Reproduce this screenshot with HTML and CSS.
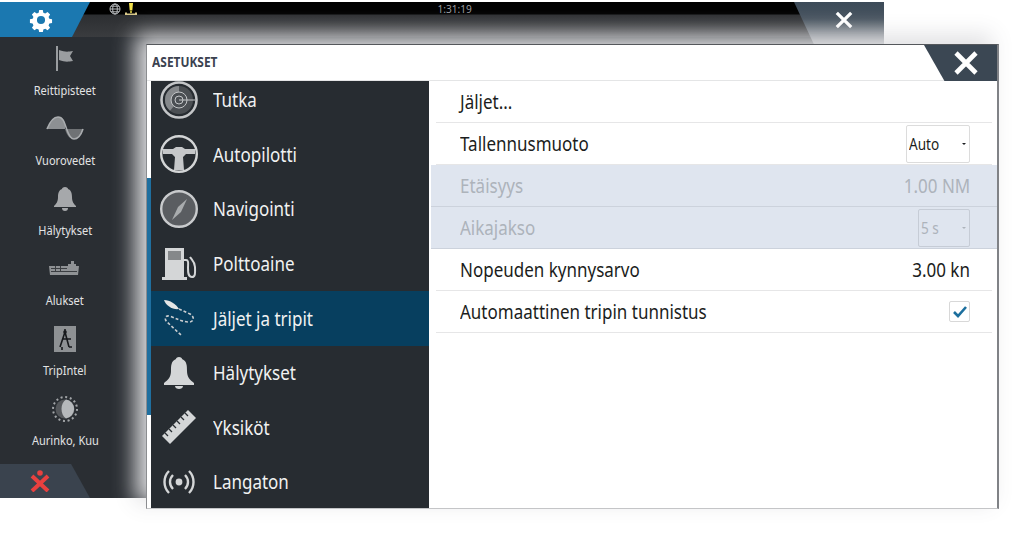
FILE: index.html
```html
<!DOCTYPE html>
<html lang="en">
<head>
    <meta charset="UTF-8">
    <title>Asetukset</title>
    <link rel="stylesheet" href="styles.css">
</head>
<body>
    <div class="back-window">
        <div class="top-bar">
            <div class="tab-gear">
                <svg viewBox="0 0 24 24" width="24" height="24"><path fill="#fff" fill-rule="evenodd" d="M10 1h4l.6 3 2.1.9 2.6-1.7 2.8 2.8-1.7 2.6.9 2.1 3 .6v4l-3 .6-.9 2.1 1.7 2.6-2.8 2.8-2.6-1.7-2.1.9-.6 3h-4l-.6-3-2.1-.9-2.6 1.7-2.8-2.8 1.7-2.6-.9-2.1-3-.6v-4l3-.6.9-2.1-1.7-2.6 2.8-2.8 2.6 1.7 2.1-.9zM12 7.500a4.500 4.500 0 1 0 0 9 4.500 4.500 0 0 0 0-9z" transform="translate(1.200 1.200) scale(.9)"/></svg>
            </div>
            <div class="status">
                <svg viewBox="0 0 12 12" width="12" height="12"><g fill="none" stroke="#b9bcbf"><circle cx="6" cy="6" r="5"/><ellipse cx="6" cy="6" rx="2.300" ry="5"/><path d="M1 6h10M2 3.200h8M2 8.800h8"/></g></svg>
                <svg viewBox="0 0 12 12" width="12" height="12"><path fill="#f2e14c" d="M4 0h4l-.7 7.500H4.700z"/><circle cx="6" cy="9" r="1" fill="#f2e14c"/><path fill="#d9c98a" d="M0 9.500h2v1h8v-1h2v2.500H0z"/></svg>
            </div>
            <div class="clock"><span>1:31:19</span></div>
            <div class="tab-close">
                <svg viewBox="0 0 20 20" width="18" height="18"><path stroke="#fff" stroke-width="3.600" d="M2 2l16 16M18 2L2 18"/></svg>
            </div>
        </div>
        <div class="side-nav">
            <div class="nav-item">
                <svg viewBox="0 0 24 26" width="24" height="26"><path fill="#9a9da0" d="M3 0h2v25H3z"/><path fill="#9a9da0" d="M6 4c6 2 8 2 14 1l-3 5 3 5c-6 1-8 1-14-1z"/></svg>
                <span>Reittipisteet</span>
            </div>
            <div class="nav-item">
                <svg viewBox="0 0 38 26" width="38" height="26"><path fill="#8d9093" d="M1 13C5 3 9 1 12 1c5 0 8 6 7 12z"/><path fill="#6f7275" d="M19 13c2 7 5 10 9 10 4 0 7-4 9-10z"/><path fill="none" stroke="#a9acaf" stroke-width="1.600" d="M1 13C5 3 9 1 12 1c6 0 7 8 9 13 2 6 4 9 7 9 4 0 7-4 9-10"/></svg>
                <span>Vuorovedet</span>
            </div>
            <div class="nav-item">
                <svg viewBox="0 0 24 26" width="24" height="26"><path fill="#a6a8ab" d="M12 1c2 0 3 1 3 2 3 1 4 4 4 8 0 5 2 7 4 9v1H1v-1c2-2 4-4 4-9 0-4 1-7 4-8 0-1 1-2 3-2z"/><path fill="#a6a8ab" d="M9 22h6c0 2-1 3-3 3s-3-1-3-3z"/></svg>
                <span>Hälytykset</span>
            </div>
            <div class="nav-item">
                <svg viewBox="0 0 32 16" width="32" height="16"><path fill="#8f9295" d="M0 5h19V3h3V0h3v3h2v2h3l-1 9H1z"/><path fill="#3b3e42" d="M2 7h16v1H2zM2 10h26v1H2zM6 5h1v5H6zM11 5h1v5h-1z"/></svg>
                <span>Alukset</span>
            </div>
            <div class="nav-item">
                <svg viewBox="0 0 22 26" width="22" height="26"><rect width="22" height="26" fill="#8e9194"/><path fill="none" stroke="#17191c" stroke-width="1.600" d="M11 3v3M11 6l-5 15M11 6l4 15M9 13h8M8 21v3M15 21h3"/><circle cx="11" cy="6" r="1.800" fill="#17191c"/></svg>
                <span>TripIntel</span>
            </div>
            <div class="nav-item">
                <svg viewBox="0 0 26 26" width="26" height="26"><circle cx="13" cy="13" r="12" fill="none" stroke="#a2a5a8" stroke-width="2" stroke-dasharray="2 2.700"/><circle cx="13" cy="13" r="9.500" fill="#55585c"/><path fill="#b5b8bb" d="M14 3.600a9.500 9.500 0 0 1 0 18.800c-3-2-4.500-5.500-4.500-9.400s1.500-7.400 4.500-9.400z"/></svg>
                <span>Aurinko, Kuu</span>
            </div>
        </div>
        <div class="tab-person">
            <svg viewBox="0 0 20 22" width="20" height="22"><circle cx="10" cy="3" r="2.800" fill="#e8403f"/><path stroke="#e8403f" stroke-width="4" d="M2 6l16 15M18 6L2 21"/></svg>
        </div>
    </div>

    <div class="dialog">
        <div class="dialog-head">
            <h1>ASETUKSET</h1>
            <div class="dialog-close">
                <svg viewBox="0 0 24 24" width="24" height="24"><path stroke="#fff" stroke-width="4.600" d="M2 2l20 20M22 2L2 22"/></svg>
            </div>
        </div>
        <div class="dialog-body">
            <div class="scroll-track"><div class="scroll-thumb"></div></div>
            <div class="menu">
                <div class="menu-list">
                    <div class="menu-item">
                        <svg viewBox="0 0 40 40" width="40" height="40"><circle cx="20" cy="20" r="14" fill="#4b4f53"/><path fill="#85888b" d="M20 6A14 14 0 0 0 6 20a14 14 0 0 0 5 10.700l4-4.700a8 8 0 0 1 5-14z"/><g fill="none" stroke="#c4c6c8"><circle cx="20" cy="20" r="17.500" stroke-width="2.600"/><circle cx="20" cy="20" r="8"/><circle cx="20" cy="20" r="4"/><path d="M20 20h16"/></g></svg>
                        <span>Tutka</span>
                    </div>
                    <div class="menu-item">
                        <svg viewBox="0 0 40 40" width="40" height="40"><circle cx="20" cy="20" r="17.800" fill="none" stroke="#d3d5d6" stroke-width="2.400"/><path fill="#c6c8ca" d="M4 15h10l3-2h6l3 2h10v5H27l-3 3 1 13h-10l1-13-3-3H4z"/></svg>
                        <span>Autopilotti</span>
                    </div>
                    <div class="menu-item">
                        <svg viewBox="0 0 40 40" width="40" height="40"><circle cx="20" cy="20" r="17.800" fill="#5a5d61" stroke="#c9cbcd" stroke-width="2.400"/><path fill="#a9acae" d="M28 10l-6 13-9 8 6-13z"/></svg>
                        <span>Navigointi</span>
                    </div>
                    <div class="menu-item">
                        <svg viewBox="0 0 36 36" width="36" height="36"><path fill="#d4d6d7" d="M4 2h19v29H4z"/><path fill="#85888a" d="M7 5h13v9H7z"/><path fill="#d4d6d7" d="M1 31h25v3H1z"/><path fill="none" stroke="#d4d6d7" stroke-width="2" d="M23 14h2c3 0 2 4 2 8s0 9 4 9 3-6 3-10c0-5-3-7-5-10"/></svg>
                        <span>Polttoaine</span>
                    </div>
                    <div class="menu-item active">
                        <svg viewBox="0 0 36 38" width="36" height="38"><path fill="#e4e6e6" d="M3 1c6 0 12 4 15 9-6 1-13-3-15-9z"/><path fill="none" stroke="#c9cdd0" stroke-width="1.600" stroke-dasharray="3 2" d="M18 10l11 5c5 3 4 8-1 8-6 0-12-3-19-6-5-1-6 3-3 6l14 13"/></svg>
                        <span>Jäljet ja tripit</span>
                    </div>
                    <div class="menu-item">
                        <svg viewBox="0 0 32 34" width="32" height="34"><path fill="#d4d6d7" d="M16 1c2 0 3 1 3 2 5 2 5 7 5 12 0 6 3 9 7 12v2H1v-2c4-3 7-6 7-12 0-5 0-10 5-12 0-1 1-2 3-2z"/><path fill="#d4d6d7" d="M12 30h8c0 2-2 3-4 3s-4-1-4-3z"/></svg>
                        <span>Hälytykset</span>
                    </div>
                    <div class="menu-item">
                        <svg viewBox="0 0 36 36" width="36" height="36"><path fill="#d4d6d7" d="M27 1l8 8L9 35 1 27z"/><path stroke="#272c31" stroke-width="1.300" d="M24 4l3 3M20 8l3 3M16 12l3 3M12 16l3 3M8 20l3 3M4 24l3 3"/></svg>
                        <span>Yksiköt</span>
                    </div>
                    <div class="menu-item">
                        <svg viewBox="0 0 32 24" width="32" height="24"><circle cx="16" cy="12" r="3.400" fill="#d4d6d7"/><path fill="none" stroke="#d4d6d7" stroke-width="2.400" d="M10 5c-4 4-4 10 0 14M22 5c4 4 4 10 0 14M6 1C0 7 0 17 6 23M26 1c6 6 6 16 0 22"/></svg>
                        <span>Langaton</span>
                    </div>
                </div>
            </div>
            <div class="settings">
                <div class="row"><span>Jäljet...</span></div>
                <div class="row">
                    <span>Tallennusmuoto</span>
                    <div class="select"><span>Auto</span><i class="caret"></i></div>
                </div>
                <div class="row disabled">
                    <span>Etäisyys</span>
                    <span class="value">1.00 NM</span>
                </div>
                <div class="row disabled">
                    <span>Aikajakso</span>
                    <div class="select small"><span>5 s</span><i class="caret"></i></div>
                </div>
                <div class="row">
                    <span>Nopeuden kynnysarvo</span>
                    <span class="value">3.00 kn</span>
                </div>
                <div class="row">
                    <span>Automaattinen tripin tunnistus</span>
                    <div class="check">
                        <svg viewBox="0 0 14 12" width="14" height="12"><path fill="none" stroke="#1c6f9e" stroke-width="2.600" d="M1 6l4 4 8-9"/></svg>
                    </div>
                </div>
            </div>
        </div>
    </div>
</body>
</html>
```

FILE: styles.css
```css
* {
    box-sizing: border-box;
}

body {
    margin: 0;
    width: 1024px;
    height: 536px;
    position: relative;
    overflow: hidden;
    background-color: #fff;
    font-family: "Noto Sans", sans-serif;
}

/* the installed font is wider than the device font, so labels get squeezed */
.nav-item span,
.menu-item span,
.row span,
.clock span,
h1 {
    display: inline-block;
    transform: scaleX(.85);
    transform-origin: left center;
}

.nav-item span {
    transform: scaleX(.92);
    transform-origin: center;
}

.clock span {
    transform: scaleX(.92);
    transform-origin: center;
}

.row .value {
    transform-origin: right center;
}

/* window behind the dialog */
.back-window {
    position: absolute;
    left: 0;
    top: 2px;
    width: 884px;
    height: 496px;
    background-color: #2a2e33;
    display: flex;
    flex-direction: column;
}

.top-bar {
    height: 35px;
    display: flex;
    align-items: flex-start;
    background: linear-gradient(#000 0, #000 12px, #2c2e31 13px, #3a3c3f 35px);
}

.tab-gear {
    width: 90px;
    height: 35px;
    display: flex;
    align-items: center;
    padding-left: 29px;
    background-color: #1b78b0;
    clip-path: polygon(0 0, 100% 0, 80% 100%, 0 100%);
}

.status {
    display: flex;
    gap: 4px;
    margin: 1px 0 0 19px;
    width: 316px;
}

.clock {
    width: 60px;
    text-align: center;
    font-size: 11px;
    line-height: 13px;
    color: #9b9da0;
}

.tab-close {
    margin-left: auto;
    width: 90px;
    height: 42px;
    padding: 9px 0 0 41px;
    background: linear-gradient(#3c4a58, #46525e 40%, #8d9197);
    clip-path: polygon(0 0, 100% 0, 100% 100%, 22% 100%);
}

.side-nav {
    flex: 1;
    padding-top: 7px;
    width: 130px;
}

.nav-item {
    height: 70px;
    display: flex;
    flex-direction: column;
    align-items: center;
    color: #e2e3e4;
    font-size: 12px;
    line-height: 16px;
}

.nav-item svg {
    height: 30px;
    margin-bottom: 9px;
    flex-shrink: 0;
}

.tab-person {
    width: 90px;
    height: 34px;
    display: flex;
    align-items: center;
    padding-left: 30px;
    background-color: #3a434e;
    clip-path: polygon(0 0, 79% 0, 100% 100%, 0 100%);
}

/* settings dialog */
.dialog {
    position: absolute;
    left: 146px;
    top: 44px;
    width: 853px;
    height: 465px;
    background-color: #fff;
    border-left: 1px solid #8b8d90;
    border-right: 2px solid #808286;
    border-top: 1px solid #55585c;
    border-bottom: 1px solid #c4c5c7;
    box-shadow: -9px -8px 20px 2px rgba(226, 226, 228, .95);
    display: flex;
    flex-direction: column;
}

.dialog-head {
    height: 36px;
    display: flex;
    justify-content: space-between;
    border-bottom: 1px solid #e4e5e6;
}

h1 {
    margin: 0;
    padding-left: 6px;
    font-size: 14px;
    line-height: 34px;
    font-weight: 700;
    color: #3b4250;
}

.dialog-close {
    width: 73px;
    height: 36px;
    padding: 6px 0 0 30px;
    background-color: #3b4753;
    clip-path: polygon(0 0, 100% 0, 100% 100%, 28% 100%);
}

.dialog-body {
    flex: 1;
    display: flex;
    min-height: 0;
}

.scroll-track {
    width: 4px;
}

.scroll-thumb {
    height: 237px;
    margin-top: 97px;
    background-color: #1f6f9f;
}

.menu {
    width: 278px;
    background-color: #272c31;
    overflow: hidden;
}

.menu-list {
    margin-top: -8px;
}

.menu-item {
    height: 54.6px;
    padding-bottom: 1px;
    display: flex;
    align-items: center;
    color: #f1f2f2;
    font-size: 20px;
}

.menu-item svg {
    width: 40px;
    margin: 0 14px 0 8px;
    flex-shrink: 0;
}

.menu-item.active {
    background-color: #073f5f;
}

.settings {
    flex: 1;
    padding-left: 2px;
}

.row {
    height: 42px;
    margin: 0 5px;
    padding: 0 22px 0 24px;
    display: flex;
    align-items: center;
    justify-content: space-between;
    border-bottom: 1px solid #e6e6e7;
    color: #1b1d20;
    font-size: 20px;
}

.row.disabled {
    margin: 0;
    padding: 0 27px 0 29px;
    background-color: #dfe5ef;
    color: #adb3bb;
    border-bottom-color: #ccd2dc;
}

.select {
    width: 64px;
    height: 38px;
    padding-left: 2px;
    display: flex;
    align-items: center;
    justify-content: space-between;
    background-color: #fff;
    border: 1px solid #dcdcdc;
    border-radius: 2px;
    font-size: 16px;
}

.select.small {
    width: 52px;
    background-color: transparent;
    border-color: #c6ccd6;
}

.caret {
    margin-right: 3px;
    border-left: 2px solid transparent;
    border-right: 2px solid transparent;
    border-top: 2px solid currentColor;
}

.check {
    width: 21px;
    height: 21px;
    display: flex;
    align-items: center;
    justify-content: center;
    border: 1px solid #d8d8d8;
    border-radius: 2px;
}
```
